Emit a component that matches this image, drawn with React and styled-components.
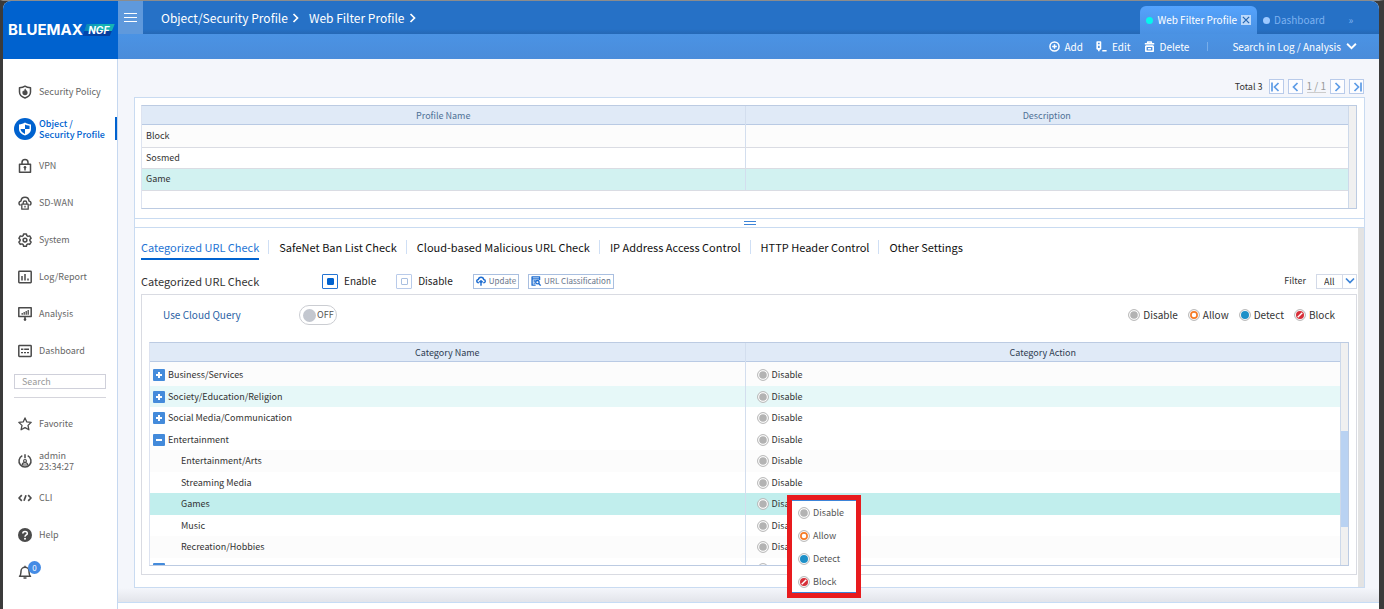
import React, { useState } from 'react'
import styled, { createGlobalStyle } from 'styled-components'

const menuItems = [
    { icon: 'policy', label: 'Security Policy' },
    { icon: 'object', label: 'Object /\nSecurity Profile' },
    { icon: 'vpn', label: 'VPN' },
    { icon: 'sdwan', label: 'SD-WAN' },
    { icon: 'system', label: 'System' },
    { icon: 'log', label: 'Log/Report' },
    { icon: 'analysis', label: 'Analysis' },
    { icon: 'dashboard', label: 'Dashboard' },
]

const userItems = [
    { icon: 'star', label: 'Favorite' },
    { icon: 'admin', label: 'admin\n23:34:27' },
    { icon: 'cli', label: 'CLI' },
    { icon: 'help', label: 'Help' },
]

const profiles = ['Block', 'Sosmed', 'Game']

const sections = [
    'Categorized URL Check',
    'SafeNet Ban List Check',
    'Cloud-based Malicious URL Check',
    'IP Address Access Control',
    'HTTP Header Control',
    'Other Settings',
]

const categories = [
    { name: 'Business/Services', sign: '+', bg: '#fcfcfc' },
    { name: 'Society/Education/Religion', sign: '+', bg: '#e6f8f8' },
    { name: 'Social Media/Communication', sign: '+', bg: '#ffffff' },
    { name: 'Entertainment', sign: '-', bg: '#ffffff' },
    { name: 'Entertainment/Arts', bg: '#fcfcfc' },
    { name: 'Streaming Media', bg: '#ffffff' },
    { name: 'Games', bg: '#c1eeed' },
    { name: 'Music', bg: '#ffffff' },
    { name: 'Recreation/Hobbies', bg: '#fcfcfc' },
    { name: '', sign: '+', bg: '#ffffff' },
]

const actions = ['Disable', 'Allow', 'Detect', 'Block']

function Icon({ name }) {
    const line = { fill: 'none', stroke: 'currentColor', strokeWidth: 1.5, strokeLinejoin: 'round' }
    const shapes = {
        policy: (
            <>
                <path {...line} d="M7 1.2C5.5 2.2 3.5 2.6 1.5 2.7V7c0 3 2.2 4.900 5.500 6C10.300 11.900 12.500 10 12.500 7V2.700C10.500 2.600 8.500 2.200 7 1.200z" />
                <path fill="currentColor" d="M7.300 3.600c.2 1.600 2.300 2.200 2.300 4a2.600 2.600 0 0 1-5.200 0c0-1 .5-1.700 1-2 .1.500.4.800.7.900.1-1.200.4-2.200 1.200-2.900z" />
            </>
        ),
        object: (
            <>
                <path fill="#fff" d="M7 .5C5.400 1.700 3.400 2.300 1 2.400v4.700c0 3.200 2.600 5.400 6 6.500 3.400-1.100 6-3.300 6-6.500V2.400C10.600 2.300 8.600 1.700 7 .5z" />
                <path fill="#0062cf" d="M7 2.600V7h4.500c0-.9.1-2.300.1-3.300C9.700 3.600 8.200 3.300 7 2.600zM7 7H2.500c.3 2.500 2.200 3.900 4.500 4.900z" />
            </>
        ),
        vpn: (
            <>
                <path {...line} d="M1.500 5.200h11v8h-11zM4 5V3.600a3 3 0 0 1 6 0V5" />
                <circle cx="7" cy="8.300" r="1.300" fill="currentColor" />
                <path {...line} d="M7 8.500v3" />
            </>
        ),
        sdwan: (
            <>
                <path {...line} d="M2.600 9.300C.4 8.600.3 5.300 3 4.900 3.500 0 10.500 0 11 4.900c2.700.4 2.600 3.700.4 4.400" />
                <path {...line} strokeWidth="1.300" d="M3.800 8.200h6.400v5H3.800zM5.200 8V6.800a1.800 1.800 0 0 1 3.600 0V8M7 9.800v1.700" />
            </>
        ),
        system: (
            <>
                <path {...line} d="M5.600 1h2.800l.4 1.700 1.200.7 1.700-.5 1.400 2.400L11.900 6.500v1.300l1.200 1.200-1.400 2.400-1.700-.5-1.200.7-.4 1.600H5.600l-.4-1.600-1.200-.7-1.700.5L.9 9l1.200-1.200V6.500L.9 5.300l1.400-2.400 1.700.5 1.200-.7z" />
                <circle {...line} cx="7" cy="7.100" r="1.900" />
            </>
        ),
        log: (
            <>
                <rect {...line} x=".8" y="1.300" width="12.400" height="11.400" rx=".6" />
                <path {...line} d="M4 6v4.600M7 4v6.600M10 8.400v2.200" />
            </>
        ),
        analysis: (
            <>
                <path {...line} d="M.8.800h12.400v8.800H.8zM7 9.600V12" />
                <path {...line} strokeWidth="1.300" d="M4.200 6v1.800M6.200 5v2.800M8.200 4v3.800M10.200 3v4.800" />
                <circle cx="7" cy="12.600" r="1.300" fill="currentColor" />
            </>
        ),
        dashboard: (
            <>
                <rect {...line} x=".8" y="1.600" width="12.400" height="10.800" rx=".6" />
                <path {...line} strokeWidth="1.400" d="M3 5.200h2.400M6.200 5.200h4.800M3 8.600h2M6 8.600h2M9 8.600h2" />
            </>
        ),
        star: <path {...line} strokeWidth="1.300" d="M7 .9l1.800 4 4.400.5-3.200 3 .9 4.400L7 10.600l-3.900 2.200.9-4.400-3.200-3 4.400-.5z" />,
        admin: (
            <>
                <path {...line} d="M4.300 1.700a6 6 0 1 0 5.400 0M7 .2v4" />
                <circle {...line} strokeWidth="1.200" cx="7" cy="6.900" r="1.400" />
                <path {...line} strokeWidth="1.200" d="M4.200 11c0-3.200 5.600-3.200 5.600 0z" />
            </>
        ),
        cli: <path {...line} strokeWidth="1.700" d="M3.800 4.200L1 7l2.800 2.800M10.200 4.200L13 7l-2.800 2.800M8 4.200L6 9.800" />,
        help: (
            <>
                <circle cx="7" cy="7" r="7" fill="currentColor" />
                <path fill="none" stroke="#fff" strokeWidth="1.600" d="M4.800 5.600c0-2.900 4.500-2.800 4.500-.2 0 1.600-2.300 1.500-2.300 3.400" />
                <circle cx="7" cy="10.700" r="1" fill="#fff" />
            </>
        ),
        bell: <path {...line} d="M1.500 11.300c1.600-1.300 1.300-3 1.500-5a4 4 0 0 1 8 0c.2 2-.1 3.700 1.500 5zM7 2.200V.8M5.500 12.900h3" />,
        add: (
            <>
                <circle {...line} cx="7" cy="7" r="5.800" strokeWidth="1.900" />
                <path {...line} strokeWidth="1.900" d="M7 4v6M4 7h6" />
            </>
        ),
        edit: <path {...line} strokeWidth="2" d="M1.500 1.300h4.200v8.700H1.500zM1.500 5h4.200M3.600 10v3M8 12.500h5.500" />,
        trash: (
            <>
                <path {...line} strokeWidth="2" d="M1 3.500h12M4.700 3V1.300h4.600V3M2.300 6v7h9.400V6" />
                <path {...line} strokeWidth="2" d="M2.300 6.500h9.400M5 9.800h4" />
            </>
        ),
        upload: (
            <>
                <path {...line} strokeWidth="2" d="M4 9.500C.2 9.500.2 5 3.400 4.800c.6-4 6.800-4 7.300 0 3.300.3 3.100 4.700-.5 4.700" />
                <path {...line} strokeWidth="2" d="M7 13.500V7M4.600 8.800L7 6.500l2.400 2.300" />
            </>
        ),
        classify: (
            <>
                <path {...line} strokeWidth="1.900" d="M12 5.500V1.200H1.500v11.600h5M1.500 4h10.500M3.500 7h3M3.500 10h2" />
                <circle {...line} strokeWidth="1.900" cx="9" cy="8.700" r="2.400" />
                <path {...line} strokeWidth="2" d="M10.800 10.500l2.700 3" />
            </>
        ),
    }
    return <svg viewBox="0 0 14 14" overflow="visible" aria-hidden="true">{shapes[name]}</svg>
}

function Chevron({ dir = 'right', bar }) {
    const turn = { right: 0, left: 180, down: 90 }[dir]
    return (
        <ChevronSvg viewBox="0 0 10 10" aria-hidden="true">
            <g transform={`rotate(${turn} 5 5)`}>
                <path d="M2.500 1L6.500 5l-4 4" />
                {bar && <path d="M9 .5v9" />}
            </g>
        </ChevronSvg>
    )
}

function Status({ kind }) {
    return (
        <StatusSvg viewBox="0 0 12 12" aria-hidden="true">
            <circle cx="6" cy="6" r="5.400" fill="#fff" stroke="#b3b3b3" />
            {kind === 'Disable' && <circle cx="6" cy="6" r="3.800" fill="#b3b3b3" />}
            {kind === 'Allow' && <circle cx="6" cy="6" r="3.100" fill="#fff" stroke="#f57c28" strokeWidth="1.700" />}
            {kind === 'Detect' && <circle cx="6" cy="6" r="4" fill="#1e90c8" />}
            {kind === 'Block' && (
                <>
                    <circle cx="6" cy="6" r="4" fill="#d62f38" />
                    <path d="M3.700 8.300l4.600-4.600" stroke="#fff" strokeWidth="1.400" />
                </>
            )}
        </StatusSvg>
    )
}

function App() {
    const [mode, setMode] = useState('Enable')
    const [cloud, setCloud] = useState(false)

    return (
        <Window>
            <GlobalStyle />
            <Sidebar>
                <Logo>
                    BLUEMAX<LogoBadge>NGF</LogoBadge>
                </Logo>
                <Menu>
                    {menuItems.map((item) => (
                        <MenuLink href="#" key={item.icon} $active={item.icon === 'object'}>
                            <MenuIcon $active={item.icon === 'object'}><Icon name={item.icon} /></MenuIcon>
                            <span>{item.label}</span>
                        </MenuLink>
                    ))}
                </Menu>
                <SearchBox>
                    <input type="text" placeholder="Search" aria-label="Search" />
                </SearchBox>
                <Menu $tight>
                    {userItems.map((item) => (
                        <MenuLink href="#" key={item.icon}>
                            <MenuIcon><Icon name={item.icon} /></MenuIcon>
                            <span>{item.label}</span>
                        </MenuLink>
                    ))}
                    <MenuLink href="#">
                        <MenuIcon>
                            <Icon name="bell" />
                            <Badge>0</Badge>
                        </MenuIcon>
                    </MenuLink>
                </Menu>
            </Sidebar>

            <Main>
                <TopBar>
                    <MenuButton aria-label="Menu"><i /><i /><i /></MenuButton>
                    <Crumbs>
                        <a href="#">Object/Security Profile <Chevron /></a>
                        <a href="#">Web Filter Profile <Chevron /></a>
                    </Crumbs>
                    <PageTab $active>
                        <Dot $color="#04f8ec" />
                        <a href="#">Web Filter Profile</a>
                        <CloseButton aria-label="Close">
                            <svg viewBox="0 0 8 8"><path d="M1.500 1.500l5 5M6.500 1.500l-5 5" /></svg>
                        </CloseButton>
                    </PageTab>
                    <PageTab>
                        <Dot $color="#9dc9ff" />
                        <a href="#">Dashboard</a>
                    </PageTab>
                    <MoreButton>»</MoreButton>
                </TopBar>
                <Toolbar>
                    <ToolButton><Icon name="add" />Add</ToolButton>
                    <ToolButton><Icon name="edit" />Edit</ToolButton>
                    <ToolButton><Icon name="trash" />Delete</ToolButton>
                    <ToolDivider />
                    <ToolButton>Search in Log / Analysis<Chevron dir="down" /></ToolButton>
                </Toolbar>

                <Content>
                    <Pager>
                        <span>Total 3</span>
                        <PageButton aria-label="First page"><Chevron dir="left" bar /></PageButton>
                        <PageButton aria-label="Previous page"><Chevron dir="left" /></PageButton>
                        <PageNumber>1 / 1</PageNumber>
                        <PageButton aria-label="Next page"><Chevron /></PageButton>
                        <PageButton aria-label="Last page"><Chevron bar /></PageButton>
                    </Pager>

                    <Panel>
                        <ProfileArea>
                            <TableFrame $height="104px">
                                <Table $lines>
                                    <thead>
                                        <tr><HeadCell $muted>Profile Name</HeadCell><HeadCell $muted>Description</HeadCell></tr>
                                    </thead>
                                    <tbody>
                                        {profiles.map((name) => (
                                            <Row key={name} $bg={name === 'Game' ? '#d2f2f1' : name === 'Block' ? '#fcfcfc' : '#fff'}>
                                                <Cell>{name}</Cell>
                                                <Cell />
                                            </Row>
                                        ))}
                                    </tbody>
                                </Table>
                                <ScrollTrack />
                            </TableFrame>
                        </ProfileArea>
                        <Splitter><i /><i /></Splitter>
                        <Detail>
                            <DetailBody>
                                <SectionTabs>
                                    {sections.map((name, i) => (
                                        <SectionTab href="#" key={name} $active={i === 0}><span>{name}</span></SectionTab>
                                    ))}
                                </SectionTabs>
                                <Options>
                                    <OptionTitle>Categorized URL Check</OptionTitle>
                                    {['Enable', 'Disable'].map((name) => (
                                        <RadioLabel key={name}>
                                            <input type="radio" name="mode" checked={mode === name} onChange={() => setMode(name)} />
                                            {name}
                                        </RadioLabel>
                                    ))}
                                    <SmallButton><Icon name="upload" />Update</SmallButton>
                                    <SmallButton><Icon name="classify" />URL Classification</SmallButton>
                                    <Filter>
                                        <label htmlFor="filter">Filter</label>
                                        <SelectBox>
                                            <select id="filter"><option>All</option></select>
                                            <SelectArrow><Chevron dir="down" /></SelectArrow>
                                        </SelectBox>
                                    </Filter>
                                </Options>
                                <CategoryBox>
                                    <QueryRow>
                                        <QueryLabel htmlFor="cloud">Use Cloud Query</QueryLabel>
                                        <Toggle>
                                            <input id="cloud" type="checkbox" checked={cloud} onChange={() => setCloud(!cloud)} />
                                            <span>{cloud ? 'ON' : 'OFF'}</span>
                                        </Toggle>
                                        <Legend>
                                            {actions.map((name) => <LegendItem key={name}><Status kind={name} />{name}</LegendItem>)}
                                        </Legend>
                                    </QueryRow>
                                    <TableArea>
                                        <TableFrame $height="224px">
                                            <Table>
                                                <thead>
                                                    <tr><HeadCell>Category Name</HeadCell><HeadCell>Category Action</HeadCell></tr>
                                                </thead>
                                                <TreeBody>
                                                    {categories.map((row) => (
                                                        <Row key={row.name} $bg={row.bg}>
                                                            <TreeCell $child={!row.sign}>
                                                                <CellLine>
                                                                    {row.sign && <Expand aria-label="Expand" $open={row.sign === '-'} />}
                                                                    {row.name}
                                                                </CellLine>
                                                            </TreeCell>
                                                            <ActionCell>
                                                                <CellLine><Status kind="Disable" />{row.name && 'Disable'}</CellLine>
                                                            </ActionCell>
                                                        </Row>
                                                    ))}
                                                </TreeBody>
                                            </Table>
                                            <ScrollTrack><ScrollThumb /></ScrollTrack>
                                        </TableFrame>
                                        <ActionMenu>
                                            {actions.map((name) => (
                                                <ActionButton key={name}><Status kind={name} />{name}</ActionButton>
                                            ))}
                                        </ActionMenu>
                                    </TableArea>
                                </CategoryBox>
                            </DetailBody>
                            <DetailScroll />
                        </Detail>
                    </Panel>
                </Content>
                <Footer />
            </Main>
        </Window>
    )
}

export default App;

const GlobalStyle = createGlobalStyle`
    * {
        box-sizing: border-box;
    }
    body {
        margin: 0;
        background: #3b3b3b;
        color: #333;
        font-family: "Noto Sans CJK KR", "Noto Sans", sans-serif;
        font-size: 9px;
        line-height: 12px;
    }
    button, input, select {
        font: inherit;
        color: inherit;
        margin: 0;
        padding: 0;
        border: none;
        background: none;
    }
    a {
        color: inherit;
        text-decoration: none;
    }
    svg {
        display: block;
        flex: none;
    }
`

const Window = styled.div`
    display: flex;
    min-height: 100vh;
    border: solid #3b3b3b;
    border-width: 0 5px 0 3px;
    border-top: 1px solid #8c8c8c;
`

const Sidebar = styled.nav`
    width: 115px;
    flex: none;
    background: #fff;
    border-right: 1px solid #c6d8f0;
    border-radius: 8px 0 0 0;
`

const Logo = styled.div`
    height: 58px;
    margin-right: -1px;
    padding-left: 5px;
    display: flex;
    align-items: center;
    background: #0062cf;
    border-radius: 8px 0 0 0;
    color: #fff;
    font-family: Inter, sans-serif;
    font-weight: 700;
    font-size: 15px;
    line-height: 16px;
`

const LogoBadge = styled.span`
    width: 32px;
    height: 12px;
    background: linear-gradient(to right, rgba(0, 80, 190, 0.5), transparent 60%), linear-gradient(#14b3b4 55%, #063f9e 55%);
    clip-path: polygon(4px 0, 100% 0, 27px 100%, 0 100%);
    font-style: italic;
    font-size: 10px;
    line-height: 12px;
    text-align: center;
`

const Menu = styled.div`
    padding-top: ${(p) => (p.$tight ? 7 : 14)}px;
`

const MenuLink = styled.a`
    height: 37px;
    padding-left: 11px;
    display: flex;
    align-items: center;
    gap: 3px;
    white-space: pre-line;
    line-height: 11px;
    color: ${(p) => (p.$active ? '#0062cf' : '#666')};
    font-weight: ${(p) => (p.$active ? 500 : 400)};
    background: ${(p) => (p.$active ? 'linear-gradient(#0062cf, #0062cf) right center / 2px 23px no-repeat' : 'none')};
`

const MenuIcon = styled.span`
    position: relative;
    width: 22px;
    height: 22px;
    display: flex;
    align-items: center;
    justify-content: center;
    border-radius: 50%;
    color: #4a4a4a;
    background: ${(p) => (p.$active ? '#0062cf' : 'none')};
    svg {
        width: 14px;
        height: 14px;
    }
`

const Badge = styled.b`
    position: absolute;
    top: 0;
    left: 14px;
    width: 13px;
    height: 13px;
    border-radius: 50%;
    background: #448be5;
    color: #fff;
    font-weight: 400;
    font-size: 8px;
    line-height: 13px;
    text-align: center;
`

const SearchBox = styled.div`
    margin: 5px 11px 0;
    padding-bottom: 8px;
    border-bottom: 1px solid #d5d5dc;
    input {
        display: block;
        width: 100%;
        height: 15px;
        padding: 0 7px;
        border: 1px solid #cfd0da;
    }
    input::placeholder {
        color: #999;
    }
`

const Main = styled.div`
    flex: 1;
    min-width: 0;
    display: flex;
    flex-direction: column;
    background: #f4f6fb;
    border-radius: 0 8px 0 0;
`

const TopBar = styled.header`
    height: 33px;
    display: flex;
    align-items: flex-end;
    background: linear-gradient(#2671c6 85%, #2568b5);
    border-radius: 0 8px 0 0;
    color: #fff;
    font-size: 10px;
`

const MenuButton = styled.button`
    width: 25px;
    height: 33px;
    display: flex;
    flex-direction: column;
    align-items: center;
    justify-content: center;
    gap: 3px;
    background: #5f99dc;
    i {
        width: 13px;
        height: 1px;
        background: #fff;
    }
`

const Crumbs = styled.div`
    align-self: center;
    display: flex;
    gap: 8px;
    margin-left: 18px;
    margin-right: auto;
    font-size: 12px;
    a {
        display: flex;
        align-items: center;
        gap: 3px;
    }
`

const ChevronSvg = styled.svg`
    width: 10px;
    height: 10px;
    fill: none;
    stroke: currentColor;
    stroke-width: 1.700;
`

const PageTab = styled.div`
    height: 28px;
    padding: 0 6px;
    display: flex;
    align-items: center;
    gap: 4px;
    border-radius: 6px 6px 0 0;
    background: ${(p) => (p.$active ? 'linear-gradient(#55a3fd, #4a91e2)' : 'none')};
    color: ${(p) => (p.$active ? '#fff' : '#7db2f0')};
`

const Dot = styled.span`
    width: 7px;
    height: 7px;
    border-radius: 50%;
    background: ${(p) => p.$color};
`

const CloseButton = styled.button`
    width: 10px;
    height: 10px;
    background: #bdd9fa;
    svg {
        width: 10px;
        height: 10px;
        stroke: #2568b5;
    }
`

const MoreButton = styled.button`
    height: 28px;
    width: 48px;
    padding-right: 8px;
    color: #7db2f0;
`

const Toolbar = styled.div`
    height: 25px;
    padding-right: 22px;
    display: flex;
    align-items: center;
    justify-content: flex-end;
    gap: 13px;
    background: linear-gradient(#4b93e4, #4a8cda);
    color: #fff;
`

const ToolButton = styled.button`
    display: flex;
    align-items: center;
    gap: 5px;
    font-size: 10px;
    svg {
        width: 11px;
        height: 11px;
    }
`

const ToolDivider = styled.span`
    width: 1px;
    height: 9px;
    margin: 0 11px 0 5px;
    background: #78aeea;
`

const Content = styled.main`
    flex: 1;
    padding: 20px 14px 14px 16px;
    background: linear-gradient(to top, #e2e4ea, #f4f6fb 14px);
`

const Pager = styled.div`
    display: flex;
    justify-content: flex-end;
    align-items: center;
    gap: 4px;
    margin-bottom: 3px;
    padding-right: 1px;
    span {
        margin-right: 2px;
    }
`

const PageButton = styled.button`
    width: 15px;
    height: 15px;
    display: flex;
    align-items: center;
    justify-content: center;
    border: 1px solid #b9cbea;
    background: #fdfdff;
    color: #5c9be6;
`

const PageNumber = styled.em`
    font-style: normal;
    font-size: 10px;
    color: #999;
    border-bottom: 1px solid #ccc;
`

const Panel = styled.section`
    background: #fff;
    border: 1px solid #c9dbf1;
`

const ProfileArea = styled.div`
    padding: 7px 7px 9px 6px;
`

const TableFrame = styled.div`
    height: ${(p) => p.$height};
    display: flex;
    align-items: stretch;
    overflow: hidden;
    border: 1px solid #bccbe2;
    border-left-color: #dde3f0;
`

const Table = styled.table`
    flex: 1;
    align-self: flex-start;
    table-layout: fixed;
    border-collapse: collapse;
    td, th {
        width: 50%;
    }
    td {
        border-bottom: ${(p) => (p.$lines ? '1px solid #dadce3' : 'none')};
    }
    td + td, th + th {
        border-left: 1px solid #d3deee;
    }
`

const HeadCell = styled.th`
    height: 19px;
    padding: 0;
    background: #e0eaf7;
    box-shadow: inset 0 -1px #b9cae4;
    color: ${(p) => (p.$muted ? '#4f7196' : '#2f3d52')};
    font-weight: 400;
`

const Row = styled.tr`
    height: 22px;
    background: ${(p) => p.$bg};
    &:nth-child(even) {
        height: 21px;
    }
`

const Cell = styled.td`
    padding: 0 4px;
`

const TreeBody = styled.tbody`
    tr:first-child {
        height: 24px;
    }
    tr:first-child td {
        padding-top: 2px;
    }
`

const TreeCell = styled.td`
    padding: 0 0 0 ${(p) => (p.$child ? 31 : 3)}px;
`

const ActionCell = styled.td`
    padding: 0 0 0 11px;
`

const CellLine = styled.div`
    display: flex;
    align-items: center;
    gap: 3px;
`

const StatusSvg = styled.svg`
    width: 12px;
    height: 12px;
`

const Expand = styled.button`
    width: 12px;
    height: 12px;
    border-radius: 1px;
    background:
        linear-gradient(#fff, #fff) center / 6px 2px no-repeat,
        linear-gradient(#fff, #fff) center / ${(p) => (p.$open ? '0 0' : '2px 6px')} no-repeat,
        #448bdb;
`

const ScrollTrack = styled.div`
    width: 8px;
    flex: none;
    border-left: 1px solid #cdd9ea;
    background: #f0f0f0;
`

const ScrollThumb = styled.div`
    height: 96px;
    margin-top: 88px;
    background: #b9d2f2;
`

const Splitter = styled.div`
    height: 10px;
    display: flex;
    flex-direction: column;
    align-items: center;
    justify-content: center;
    gap: 2px;
    border: solid #c9dbf1;
    border-width: 1px 0;
    i {
        width: 12px;
        height: 1px;
        background: #3d84d8;
    }
`

const Detail = styled.div`
    display: flex;
`

const DetailBody = styled.div`
    flex: 1;
    min-width: 0;
    padding: 9px 1px 12px 6px;
`

const DetailScroll = styled.div`
    width: 6px;
    background: #e3e3e3;
`

const SectionTabs = styled.div`
    display: flex;
    height: 23px;
    color: #111;
    font-size: 11px;
    line-height: 20px;
`

const SectionTab = styled.a`
    & + & {
        margin-left: 9px;
        padding-left: 11px;
        background: linear-gradient(#cfdff5, #cfdff5) left 3px / 1px 14px no-repeat;
    }
    span {
        display: block;
        height: 23px;
        color: ${(p) => (p.$active ? '#2474d4' : 'inherit')};
        border-bottom: ${(p) => (p.$active ? '2px solid #0062cf' : 'none')};
    }
`

const Options = styled.div`
    display: flex;
    align-items: center;
    height: 16px;
    margin: 13px 0 5px;
    font-size: 11px;
`

const OptionTitle = styled.span`
    width: 181px;
`

const RadioLabel = styled.label`
    display: flex;
    align-items: center;
    gap: 6px;
    margin-right: 20px;
    font-size: 10px;
    color: #222;
    input {
        appearance: none;
        width: 16px;
        height: 15px;
        display: grid;
        place-items: center;
        border: 1px solid #b9cbea;
        border-radius: 1px;
    }
    input::before {
        content: '';
        width: 5px;
        height: 5px;
        border: 1px solid #a9bfe0;
        border-radius: 1px;
    }
    input:checked {
        border-color: #2474d4;
    }
    input:checked::before {
        background: #0062cf;
        border-color: #0062cf;
    }
`

const SmallButton = styled.button`
    height: 15px;
    padding: 0 2px;
    margin-right: 9px;
    display: flex;
    align-items: center;
    gap: 3px;
    border: 1px solid #a9bfe0;
    color: #69748a;
    font-size: 8px;
    line-height: 12px;
    svg {
        width: 10px;
        height: 10px;
        color: #1d6cd0;
    }
`

const Filter = styled.div`
    margin-left: auto;
    display: flex;
    align-items: center;
    gap: 10px;
    font-size: 9px;
`

const SelectBox = styled.div`
    display: flex;
    border: 1px solid #d3dae8;
    height: 15px;
    select {
        appearance: none;
        width: 25px;
        padding-left: 7px;
        line-height: 13px;
    }
`

const SelectArrow = styled.span`
    width: 14px;
    display: flex;
    align-items: center;
    justify-content: center;
    border-left: 1px solid #d3dae8;
    color: #3d84d8;
`

const CategoryBox = styled.div`
    padding: 6px 7px 8px;
    border: 1px solid #d9dbe2;
`

const QueryRow = styled.div`
    display: flex;
    align-items: center;
    height: 28px;
    margin-bottom: 13px;
    padding: 0 14px;
    font-size: 10px;
`

const QueryLabel = styled.label`
    width: 136px;
    color: #2a62a5;
`

const Toggle = styled.label`
    width: 38px;
    height: 20px;
    padding: 0 3px;
    display: flex;
    align-items: center;
    gap: 1px;
    border: 1px solid #cbcdd2;
    border-radius: 10px;
    font-size: 9px;
    color: #555;
    input {
        appearance: none;
        width: 13px;
        height: 13px;
        flex: none;
        border-radius: 50%;
        background: #c3c7cf;
    }
`

const Legend = styled.div`
    margin-left: auto;
    display: flex;
    gap: 10px;
`

const LegendItem = styled.span`
    display: flex;
    align-items: center;
    gap: 3px;
`

const TableArea = styled.div`
    position: relative;
`

const ActionMenu = styled.div`
    position: absolute;
    top: 153px;
    left: calc(50% + 38px);
    width: 74px;
    padding-top: 1px;
    border: 5px solid #e81b1e;
    background: #fff;
    box-shadow: inset 0 1px #3d84d8, inset 0 -1px #3d84d8;
`

const ActionButton = styled.button`
    display: flex;
    align-items: center;
    gap: 3px;
    height: 23px;
    padding-left: 6px;
    color: #555;
`

const Footer = styled.footer`
    height: 7px;
    background: #fff;
    border-top: 1px solid #c6dcf5;
`
